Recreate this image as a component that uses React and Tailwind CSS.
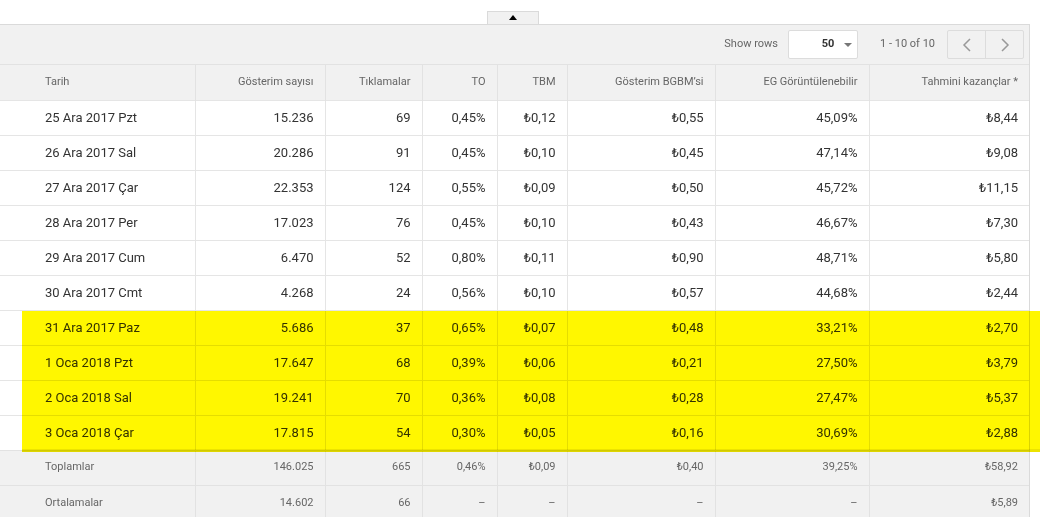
import React from 'react'

const rows = [
  ['25 Ara 2017 Pzt', '15.236', '69', '0,45%', '₺0,12', '₺0,55', '45,09%', '₺8,44'],
  ['26 Ara 2017 Sal', '20.286', '91', '0,45%', '₺0,10', '₺0,45', '47,14%', '₺9,08'],
  ['27 Ara 2017 Çar', '22.353', '124', '0,55%', '₺0,09', '₺0,50', '45,72%', '₺11,15'],
  ['28 Ara 2017 Per', '17.023', '76', '0,45%', '₺0,10', '₺0,43', '46,67%', '₺7,30'],
  ['29 Ara 2017 Cum', '6.470', '52', '0,80%', '₺0,11', '₺0,90', '48,71%', '₺5,80'],
  ['30 Ara 2017 Cmt', '4.268', '24', '0,56%', '₺0,10', '₺0,57', '44,68%', '₺2,44'],
  ['31 Ara 2017 Paz', '5.686', '37', '0,65%', '₺0,07', '₺0,48', '33,21%', '₺2,70'],
  ['1 Oca 2018 Pzt', '17.647', '68', '0,39%', '₺0,06', '₺0,21', '27,50%', '₺3,79'],
  ['2 Oca 2018 Sal', '19.241', '70', '0,36%', '₺0,08', '₺0,28', '27,47%', '₺5,37'],
  ['3 Oca 2018 Çar', '17.815', '54', '0,30%', '₺0,05', '₺0,16', '30,69%', '₺2,88'],
]

const footer = [
  ['Toplamlar', '146.025', '665', '0,46%', '₺0,09', '₺0,40', '39,25%', '₺58,92'],
  ['Ortalamalar', '14.602', '66', '–', '–', '–', '–', '₺5,89'],
]

const headers = ['Tarih', 'Gösterim sayısı', 'Tıklamalar', 'TO', 'TBM', 'Gösterim BGBM\u2019si', 'EG Görüntülenebilir', 'Tahmini kazançlar *']

const widths = ['w-[195px]', 'w-[130px]', 'w-[97px]', 'w-[75px]', 'w-[70px]', 'w-[148px]', 'w-[154px]', 'w-[160px]']

export default function App() {
  return (
    <div className="relative w-[1040px] h-[517px] overflow-hidden bg-white" style={{ fontFamily: 'Roboto, "Liberation Sans", sans-serif' }}>
      {/* top strip with collapse tab */}
      <div className="h-[24px] flex justify-start">
        <div className="ml-[487px] mt-[11px] w-[52px] h-[13px] bg-[#f1f1f1] border border-b-0 border-[#dadada] flex items-start justify-center">
          <div className="mt-[3px] w-0 h-0 border-l-[4px] border-r-[4px] border-b-[5px] border-l-transparent border-r-transparent border-b-black" />
        </div>
      </div>

      <div className="w-[1030px] border-t border-r border-[#dadada] bg-[#f1f1f1]">
        {/* toolbar */}
        <div className="h-[40px] flex items-center justify-end pr-[5px] border-b border-[#e2e2e2] text-[11px] text-[#666]">
          <span className="mr-[10px]">Show rows</span>
          <div className="w-[70px] h-[29px] bg-white border border-[#dcdcdc] rounded-[2px] flex items-center pl-[25px] pr-[5px]">
            <span className="font-bold text-[#333] w-[30px] text-center">50</span>
            <div className="ml-[2px] w-0 h-0 border-l-[4px] border-r-[4px] border-t-[4px] border-l-transparent border-r-transparent border-t-[#777]" />
          </div>
          <span className="ml-[22px] mr-[12px]">1 - 10 of 10</span>
          <div className="flex h-[29px] border border-[#dcdcdc] rounded-[2px]">
            <div className="w-[38px] flex items-center justify-center border-r border-[#dcdcdc]">
              <svg width="10" height="16" viewBox="0 0 10 16" fill="none" stroke="#999" strokeWidth="1.5"><path d="M8 2 L2 8 L8 14" /></svg>
            </div>
            <div className="w-[37px] flex items-center justify-center">
              <svg width="10" height="16" viewBox="0 0 10 16" fill="none" stroke="#999" strokeWidth="1.5"><path d="M2 2 L8 8 L2 14" /></svg>
            </div>
          </div>
        </div>

        <table className="table-fixed border-collapse w-[1029px]">
          <thead>
            <tr className="h-[35px] text-[11px] text-[#666]">
              {headers.map((h, i) => (
                <th key={h} className={`${widths[i]} font-normal border-l border-[#e2e2e2] first:border-l-0 ${i === 0 ? 'text-left pl-[45px]' : 'text-right pr-[11px]'}`}>{h}</th>
              ))}
            </tr>
          </thead>
          <tbody>
            {rows.map(r => (
              <tr key={r[0]} className="h-[35px] bg-white text-[13px] text-[#333] border-t border-[#e5e5e5]">
                {r.map((c, i) => (
                  <td key={i} className={`border-l border-[#e5e5e5] first:border-l-0 ${i === 0 ? 'text-left pl-[45px]' : 'text-right pr-[11px]'}`}>{c}</td>
                ))}
              </tr>
            ))}
            {footer.map(r => (
              <tr key={r[0]} className="h-[35px] bg-[#f1f1f1] text-[11px] text-[#666] border-t border-[#e2e2e2]">
                {r.map((c, i) => (
                  <td key={i} className={`border-l border-[#e2e2e2] first:border-l-0 ${i === 0 ? 'text-left pl-[45px]' : 'text-right pr-[11px]'}`}>{c}</td>
                ))}
              </tr>
            ))}
          </tbody>
        </table>
      </div>

      {/* highlighter mark */}
      <div className="absolute left-[22px] top-[311px] w-[1018px] h-[141px] bg-[#fff700] mix-blend-multiply border-b-[3px] border-[#ece300]" />
    </div>
  )
}
